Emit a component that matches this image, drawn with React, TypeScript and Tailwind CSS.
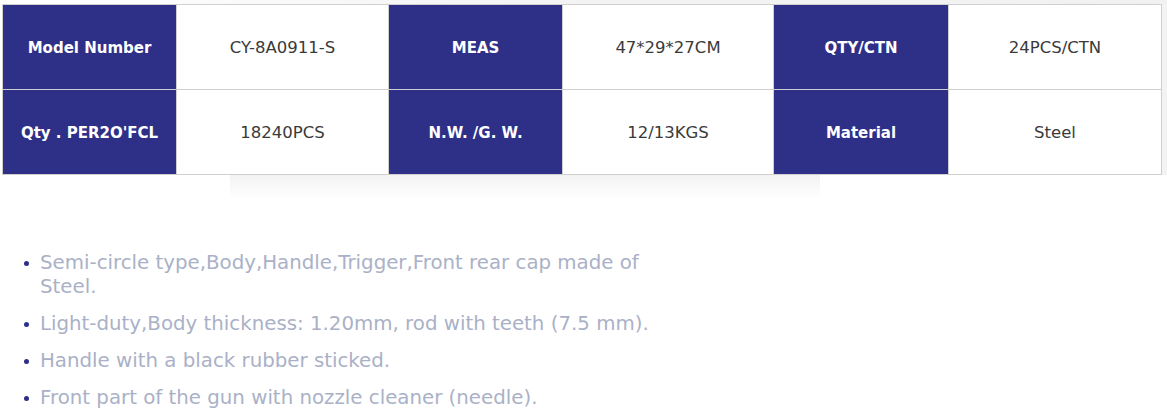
const rows = [
  [
    ['Model Number', 'CY-8A0911-S'],
    ['MEAS', '47*29*27CM'],
    ['QTY/CTN', '24PCS/CTN'],
  ],
  [
    ['Qty . PER2O\'FCL', '18240PCS'],
    ['N.W. /G. W.', '12/13KGS'],
    ['Material', 'Steel'],
  ],
]

const features = [
  'Semi-circle type,Body,Handle,Trigger,Front rear cap made of Steel.',
  'Light-duty,Body thickness: 1.20mm, rod with teeth (7.5 mm).',
  'Handle with a black rubber sticked.',
  'Front part of the gun with nozzle cleaner (needle).',
]

export default function App() {
  return (
    <div className="w-[1167px] h-[420px] bg-white overflow-hidden" style={{ fontFamily: '"DejaVu Sans", "Noto Sans", sans-serif' }}>
      {/* top strip */}
      <div className="h-[4px] bg-gradient-to-r from-white via-[#f3f3f3] to-[#f1f1f1]" />

      <div className="flex">
        <table className="ml-[2px] border-collapse border border-[#cfcfcf] table-fixed w-[1159px]">
          <colgroup>
            <col className="w-[174px]" />
            <col className="w-[212px]" />
            <col className="w-[174px]" />
            <col className="w-[211px]" />
            <col className="w-[175px]" />
            <col className="w-[213px]" />
          </colgroup>
          <tbody>
            {rows.map((r, i) => (
              <tr key={i} className="h-[85px]">
                {r.map(([k, v]) => (
                  <>
                    <td key={k} className="bg-[#2e3088] text-white text-[15px] font-semibold text-center border border-[#cfcfcf] pt-[3px]">{k}</td>
                    <td key={k + 'v'} className="bg-white text-[#3a3a3a] text-[16.5px] text-center border border-[#cfcfcf] pt-[3px]">{v}</td>
                  </>
                ))}
              </tr>
            ))}
          </tbody>
        </table>
        <div className="flex-1 bg-[#f3f3f3]" />
      </div>

      {/* soft shadow under table */}
      <div className="ml-[230px] w-[590px] h-[24px] bg-gradient-to-b from-[#f2f2f2] via-[#f9f9f9] to-white" />

      <ul className="mt-[52px] ml-[24px] w-[670px] text-[#aab1c7] text-[19.8px] leading-[24px]">
        {features.map(f => (
          <li key={f} className="flex mb-[13px]">
            <span className="w-[16px] shrink-0 flex pt-[10px]">
              <span className="w-[5px] h-[5px] rounded-full bg-[#2e3088]" />
            </span>
            <span>{f}</span>
          </li>
        ))}
      </ul>
    </div>
  )
}
